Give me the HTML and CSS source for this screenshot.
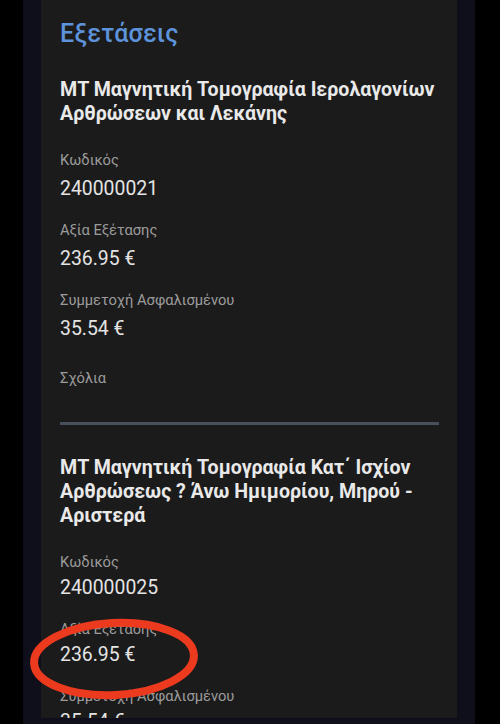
FILE: index.html
```html
<!DOCTYPE html>
<html lang="el">

<head>
    <meta charset="UTF-8">
    <meta name="viewport" content="width=device-width, initial-scale=1.0">
    <title>Εξετάσεις</title>
    <link rel="stylesheet" href="styles.css">
</head>

<body>
    <div class="frame">
        <div class="card">
            <h1 class="title">Εξετάσεις</h1>

            <div class="exam">
                <h2 class="examName">ΜΤ Μαγνητική Τομογραφία Ιερολαγονίων Αρθρώσεων και Λεκάνης</h2>
                <div class="field">
                    <div class="label">Κωδικός</div>
                    <div class="value">240000021</div>
                </div>
                <div class="field">
                    <div class="label">Αξία Εξέτασης</div>
                    <div class="value">236.95 €</div>
                </div>
                <div class="field">
                    <div class="label">Συμμετοχή Ασφαλισμένου</div>
                    <div class="value">35.54 €</div>
                </div>
                <div class="field comments">
                    <div class="label">Σχόλια</div>
                    <div class="value"></div>
                </div>
            </div>

            <hr class="divider">

            <div class="exam">
                <h2 class="examName">ΜΤ Μαγνητική Τομογραφία Κατ΄ Ισχίον Αρθρώσεως ? Άνω Ημιμορίου, Μηρού - Αριστερά</h2>
                <div class="field">
                    <div class="label">Κωδικός</div>
                    <div class="value">240000025</div>
                </div>
                <div class="field">
                    <div class="label">Αξία Εξέτασης</div>
                    <div class="value">236.95 €</div>
                </div>
                <div class="field">
                    <div class="label">Συμμετοχή Ασφαλισμένου</div>
                    <div class="value">35.54 €</div>
                </div>
            </div>
        </div>
    </div>

    <!-- κόκκινος κύκλος πάνω στην τιμή -->
    <svg class="mark" width="180" height="90" viewBox="0 0 180 90">
        <ellipse cx="90" cy="45" rx="80" ry="36" fill="none" stroke="#ec3a1f" stroke-width="8" transform="rotate(-3 90 45)" />
    </svg>
</body>

</html>
```

FILE: styles.css
```css
body {
    margin: 0;
    background-color: #000;
    height: 724px;
    overflow: hidden;
    font-family: Roboto, "Noto Sans", sans-serif;
}

.frame {
    margin-left: 23px;
    width: 416px;
    height: 724px;
    padding: 0 18px;
    background-color: #0f0f1b;
}

.card {
    height: 718px;
    background-color: #1b1b1b;
    padding: 0 18px 0 19px;
    overflow: hidden;
}

.title {
    margin: 0;
    padding-top: 19px;
    color: #5d93da;
    font-size: 25px;
    font-weight: 500;
    line-height: 30px;
    letter-spacing: 0.2px;
}

.examName {
    margin: 29px 0 0;
    color: #e9e9e9;
    font-size: 19.6px;
    font-weight: 700;
    line-height: 24px;
}

.divider + .exam .examName {
    margin-top: 31px;
}

.field {
    margin-top: 24px;
}

.field + .field {
    margin-top: 20px;
}

.field.comments {
    margin-top: 28px;
}

.divider + .exam .value {
    margin-top: 5px;
}

.label {
    color: #9b9b9b;
    font-size: 14.7px;
    line-height: 20px;
}

.value {
    margin-top: 8px;
    color: #e4e4e4;
    font-size: 19.4px;
    line-height: 22px;
    min-height: 22px;
}

.divider {
    margin: 4px 0 0;
    border: none;
    height: 3px;
    background-color: #48505e;
}

.mark {
    position: absolute;
    left: 24px;
    top: 614px;
}
```
